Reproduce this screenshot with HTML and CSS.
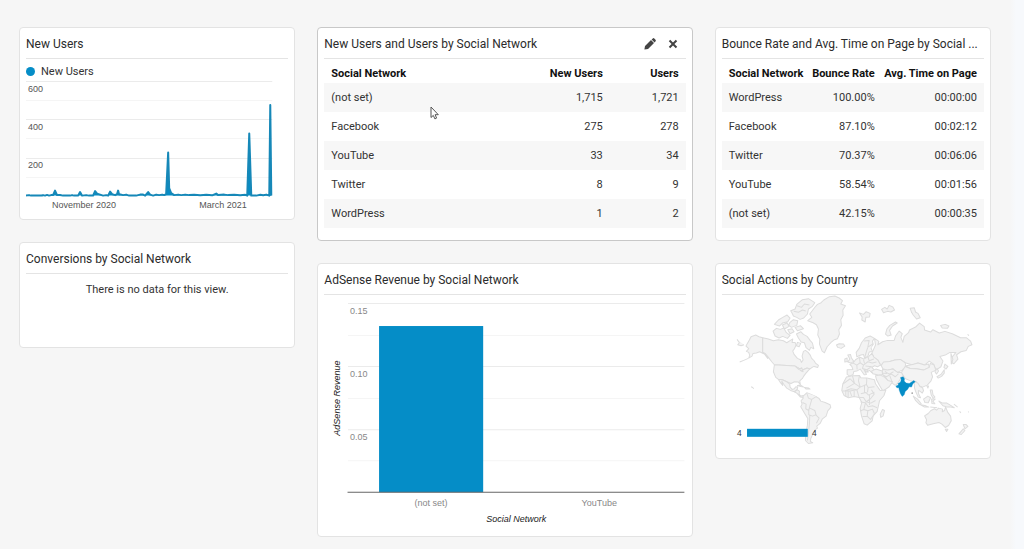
FILE: index.html
```html
<!DOCTYPE html>
<html lang="en">
<head>
<meta charset="utf-8">
<meta name="viewport" content="width=device-width, initial-scale=1">
<title>Social dashboard</title>
<link rel="stylesheet" href="styles.css">
</head>
<body>
<main class="dashboard">
  <div class="column">
    <section class="card">
      <header class="card-header"><h2 class="card-title">New Users</h2></header>
      <div class="legend"><span class="legend-dot"></span>New Users</div>
      <svg class="chart" viewBox="0 0 262 133" role="img" aria-label="New users over time">
        <path class="grid" d="M0 1.5H246M0 39.5H246M0 78.5H246"/>
        <path class="grid-minor" d="M0 20.5H246M0 58.5H246M0 97.5H246"/>
        <path class="series" d="M0 115.500L3 115L5 115.500H16L17 115L19 115.500L21 114.800L23 115.500L25 115L27 115L29 110.500L31 115L34 114.800L37 115.500H44L46 115L48 115.500H52L54 112L56 115.500L60 115L63 115.500H67L69 111L71 113.500L74 114.500L77 115.500L80 115L82 115.500L84 111.500L86 114L89 115L91 114L92 110.500L93 114.500L95 114.500L97 115L100 114.500L103 115.500H110L114 114.500L117 114.500L119 115.500L122 112L124 114.500L127 115.500L130 114.500L133 115L136 114.500L138 115L140 114L142 72.500L143 108L145 113L148 115L152 114.500L155 115L159 114.500L163 115L168 114.700L174 115.200L180 114.700L186 115.200L190 113.500L192 115L198 114.500L202 115L208 114.700L214 115.200L219 114.700L221 115.500L223 53.500L225 115.500H230L234 114.700L237 115.200L240 114.500L243 115.500L244 25L245 115.500"/>
        <g class="axis-text"><text x="2" y="12">600</text><text x="2" y="50">400</text><text x="2" y="88">200</text><text x="26" y="128">November 2020</text><text x="173" y="128">March 2021</text></g>
      </svg>
    </section>
    <section class="card card-empty">
      <header class="card-header"><h2 class="card-title">Conversions by Social Network</h2></header>
      <p class="empty">There is no data for this view.</p>
    </section>
  </div>

  <div class="column">
    <section class="card card-active">
      <header class="card-header">
        <h2 class="card-title">New Users and Users by Social Network</h2>
        <div class="tools">
          <button type="button" class="tool" aria-label="Edit widget"><svg width="12" height="12" viewBox="0 0 12 12"><path d="M.4 11.600L1 8L7 2L10 5L4 11ZM7.600 1.400L8.800 .4Q9.600 -.2 10.300.500L11.500 1.700Q12.200 2.400 11.600 3.200L10.600 4.400Z"/></svg></button>
          <button type="button" class="tool" aria-label="Remove widget"><svg width="10" height="10" viewBox="0 0 10 10"><path d="M.8 2.200L2.200 .8L5 3.600L7.800 .8L9.200 2.200L6.400 5L9.200 7.800L7.800 9.200L5 6.400L2.200 9.200L.8 7.800L3.600 5Z"/></svg></button>
        </div>
      </header>
      <table class="table users">
        <thead><tr><th>Social Network</th><th>New Users</th><th>Users</th></tr></thead>
        <tbody>
          <tr><td>(not set)</td><td>1,715</td><td>1,721</td></tr>
          <tr><td>Facebook</td><td>275</td><td>278</td></tr>
          <tr><td>YouTube</td><td>33</td><td>34</td></tr>
          <tr><td>Twitter</td><td>8</td><td>9</td></tr>
          <tr><td>WordPress</td><td>1</td><td>2</td></tr>
        </tbody>
      </table>
      <svg class="pointer" width="9" height="14" viewBox="0 0 9 14" aria-hidden="true"><path d="M1 1V11.500L3.300 9.400L4.900 12.900L6.600 12.100L5.100 8.700H8.300Z"/></svg>
    </section>
    <section class="card">
      <header class="card-header"><h2 class="card-title">AdSense Revenue by Social Network</h2></header>
      <svg class="chart" viewBox="0 0 361 235" role="img" aria-label="AdSense revenue by social network">
        <path class="grid" d="M24 8.500H360M24 71.500H360M24 134.500H360"/>
        <path class="grid-minor" d="M24 40.500H360M24 103.500H360M24 165.500H360"/>
        <rect class="bar" x="55" y="31" width="104" height="166"/>
        <path class="baseline" d="M23.500 197H360"/>
        <g class="axis-text soft"><text x="26" y="19">0.15</text><text x="26" y="82">0.10</text><text x="26" y="145">0.05</text><text class="middle" x="107" y="211">(not set)</text><text class="middle" x="275" y="211">YouTube</text></g>
        <g class="axis-title"><text class="middle" x="192" y="227">Social Network</text><text class="middle" transform="translate(16 103) rotate(-90)">AdSense Revenue</text></g>
      </svg>
    </section>
  </div>

  <div class="column">
    <section class="card">
      <header class="card-header"><h2 class="card-title">Bounce Rate and Avg. Time on Page by Social ...</h2></header>
      <table class="table bounce">
        <thead><tr><th>Social Network</th><th>Bounce Rate</th><th>Avg. Time on Page</th></tr></thead>
        <tbody>
          <tr><td>WordPress</td><td>100.00%</td><td>00:00:00</td></tr>
          <tr><td>Facebook</td><td>87.10%</td><td>00:02:12</td></tr>
          <tr><td>Twitter</td><td>70.37%</td><td>00:06:06</td></tr>
          <tr><td>YouTube</td><td>58.54%</td><td>00:01:56</td></tr>
          <tr><td>(not set)</td><td>42.15%</td><td>00:00:35</td></tr>
        </tbody>
      </table>
    </section>
    <section class="card">
      <header class="card-header"><h2 class="card-title">Social Actions by Country</h2></header>
      <svg class="chart" viewBox="21 15 786 471" role="img" aria-label="World map of social actions">
        <g class="land">
          <path d="M93 168L97 160L103 150L108 140L122 135L132 140L143 143V186L150 190L160 202L158 205L148 192L134 185L124 189L114 190L111 198L101 204L104 196L101 187L94 184L101 176Z"/>
          <path d="M74 216L86 211L100 205M66 148L73 158L68 164L78 167L87 164"/>
          <path d="M143 143L160 147L175 152L190 149L205 152L215 158L226 151L233 147L231 157L240 157L243 165L238 176L233 183L237 193L247 205L256 209L259 217L264 210L261 198L265 184L271 181L279 187L286 196L289 204L297 212L301 219L310 226L308 232L297 229L291 232L283 238L276 234L266 238L258 243L253 236L240 228L178 224L170 215L160 202L150 190L143 186Z"/>
          <path d="M178 224L240 228L253 236L258 243L266 238L276 234L284 236L280 241L272 250L266 258L262 265L254 272L256 284L250 276L238 275L228 280L215 275L200 268L190 268L182 262L175 245Z"/>
          <path d="M190 268L200 268L215 275L224 282L225 291L231 298L238 296L241 291L248 290L246 299L238 305L226 301L215 294L207 284L200 273L203 286L195 276Z"/>
          <path d="M238 305L246 299L253 303L252 312L257 318L266 316L264 322L256 321L246 310ZM247 286L257 285L266 291L257 289ZM268 292L281 294L285 297L273 297Z"/>
          <path d="M264 318L275 308L288 313L300 318L312 325L317 333L330 337L345 344L347 352L338 362L333 378L322 386L315 400L305 408L307 414L299 420L293 432L287 445L286 454L293 458L280 460L271 451L272 430L277 405L278 385L267 367L257 350L261 342L258 332L264 325Z"/>
          <path d="M275 309L280 324L290 328L304 319M262 337L273 342L272 356L281 361L284 349L290 328M281 361L281 374L292 378L303 374L299 361L284 354M284 376L283 400L280 429L277 451M303 375L312 384L304 399"/>
          <path d="M278 92L290 82L284 72L300 51L307 43L318 38L326 30L343 20L359 18L372 24L382 32L377 42L391 47L383 60L384 76L377 89L379 106L371 119L373 132L367 146L358 149L347 158L336 170L328 188L321 183L313 162L314 148L308 135L310 117L304 104L294 98Z"/>
          <path d="M232 71L227 62L240 57L245 43L262 29L280 26L299 38L292 49L280 57L277 72L266 84L255 88L245 82L235 78Z"/>
          <path d="M236 64L250 67L262 60L272 63M246 47L259 52L268 42L283 45"/>
          <path d="M178 103L190 90L203 82L216 75L225 84L218 95L202 99L193 108ZM224 98L235 89L248 92L245 106L229 112L221 105ZM240 112L256 107L265 116L247 122ZM202 105L216 99L222 109L208 117ZM174 123L184 115L196 118L206 114L214 128L225 136L217 145L203 139L192 144L180 138ZM218 119L231 116L237 125L225 131ZM244 132L257 125L265 133L276 139L285 151L292 159L296 176L287 172L283 181L273 173L268 158L258 156L250 144ZM247 157L257 160L252 170L244 167Z"/>
          <path d="M364 165L372 161L385 162L389 168L378 175L368 172ZM108 290L113 292L116 296"/>
          <path d="M241 229L251 238L260 233L264 245L254 239"/>
        </g>
        <g class="land" transform="translate(390 0)">
          <path d="M43 69L55 73L63 65L75 70L73 81L62 82L60 96L50 90L51 81ZM109 58L119 52L126 57L132 46L143 51L148 60L137 66L127 64L115 68ZM195 55L207 53L211 66L219 71L225 83L214 87L204 75L199 67ZM286 106L300 103L311 108L307 115L291 114Z"/>
          <path d="M121 132L125 117L134 106L151 96L156 99L142 108L133 121L138 135L128 138Z"/>
          <path d="M35 200L33 187L42 175L49 158L60 144L75 138L88 145L82 153L84 163L77 173L82 184L72 186L68 199L58 204L55 193L47 195Z"/>
          <path d="M88 145L101 154L98 164L112 155L127 151L147 151L151 138L162 123L171 131L167 142L173 157L177 139L190 128L193 120L211 111L223 99L237 110L238 120L256 126L263 119L282 129L299 124L321 131L346 143L363 143L376 153L380 164L369 169L363 181L347 185L334 194L338 207L326 221L320 218L319 203L332 187L314 187L300 195L284 199L293 213L287 230L272 240L265 222L252 213L238 225L218 219L202 225L180 218L165 208L149 210L134 214L132 224L119 231L106 225L98 210L86 201L80 190L86 176L91 165Z"/>
          <path d="M108 226L115 216L134 214L149 210L165 208L180 218L182 230L171 240L156 247L143 236L127 241L113 236Z"/>
          <path d="M180 228L202 223L218 219L238 225L250 222L252 232L235 240L213 236L195 235Z"/>
          <path d="M168 248L180 229L195 235L213 236L235 240L252 232L255 220L266 224L272 240L258 247L262 260L257 273L246 285L232 291L221 287L213 274L198 273L181 266Z"/>
          <path d="M112 238L128 240L143 237L157 247L169 247L175 260L166 266L157 280L150 286L141 279L130 276L120 260L110 252Z"/>
          <path d="M8 195L16 193L19 204L26 214L17 219L8 216L14 207ZM-1 207L6 204L6 214L-1 216Z"/>
          <path d="M6 239L23 238L20 229L14 223L24 219L31 209L43 201L56 207L71 199L80 190L86 201L98 210L106 225L97 230L88 227L80 232L88 240L80 248L73 241L64 246L56 237L64 253L57 254L45 237L35 243L26 244L24 253L14 258L6 253Z"/>
          <path d="M79 243L92 237L111 243L112 253L99 255L83 251ZM91 257L106 255L119 262L128 271L142 275L132 290L113 303L103 286L94 269ZM111 249L126 250"/>
          <path d="M-7 282L4 261L22 257L43 256L47 263L65 264L88 269L91 281L105 301L122 300L116 317L103 332L99 350L96 364L84 377L81 392L66 405L57 401L49 377L45 355L50 337L42 322L27 319L10 323L-3 316L-10 301Z"/>
          <path d="M112 358L118 361L114 377L107 382L105 372Z"/>
          <path d="M-7 282L15 266M4 294L28 280L45 291M22 257L28 280L15 266M43 256L40 272L45 291L35 299L18 296L0 302M65 264L64 283L69 292L88 290M45 291L64 283M47 311L62 307L70 315L88 306M35 299L42 322L55 322L63 335L76 326L87 312L79 299M-9 303L14 303L20 319M14 303L35 299M58 286L58 307M69 292L67 307M46 336L61 338L69 350L82 347L96 353M61 338L56 358L47 362M56 358L68 362L66 378L52 379M68 362L82 357L88 371M63 335L77 339L91 331M66 378L76 388L88 371M2 303V319M9 303V322M27 300V319M73 315V345"/>
          <path d="M24 219L35 225L45 218L55 225L68 215L81 219L94 216M35 225L36 238M45 218L43 203M55 225L52 235L65 239L76 232M68 199L72 212L86 207M55 209L58 220M61 228L80 230M65 239L69 248M111 253L123 260L139 252L150 260L160 251M119 244L132 252L145 245M132 252L141 276M84 161L68 171L63 187L58 204M68 171L72 151L57 153"/>
          <path d="M207 275L218 279L224 289L232 293L235 302L231 309L225 304L220 301L220 311L226 323L219 321L212 306L208 294ZM245 288L250 288L248 294ZM255 300L261 300L263 313L269 321L264 325L258 315Z"/>
          <path d="M204 318L217 327L228 341L223 343L211 331ZM235 327L248 318L256 323L249 338L239 337ZM226 344L239 346L251 351L238 351ZM259 327L270 327L263 333L269 341L260 340ZM281 333L292 339L305 339L315 345L327 353L316 351L306 351L293 347ZM255 351L276 353M326 342L337 351"/>
          <path d="M275 235L280 243L274 252L269 245ZM299 222L308 229L302 237L296 232ZM297 239L297 249L289 259L279 264L275 260L287 253ZM317 190L323 208L318 222Z"/>
          <path d="M238 377L249 370L257 361L268 356L274 360L280 354L292 357L291 365L298 361L301 350L307 366L316 378L318 392L310 406L300 412L290 402L281 397L264 401L247 405L242 398L244 389ZM300 417L308 417L304 424ZM354 403L362 403L368 409L359 416ZM354 416L359 421L348 433L341 431Z"/>
          <path class="bar" d="M166 262L174 260L178 266L177 273L183 279L192 280L199 276L206 271L210 275L203 281L199 291L192 290L187 298L180 304L177 314L171 319L166 311L162 300L161 293L155 293L152 288L160 285L158 281L166 276L168 269Z"/>
          <path class="speck" d="M199 307L203 307L202 312L199 311Z"/>
          <path d="M368 366L371 365M343 364L347 368M367 133L371 137"/>
        </g>
        <rect class="bar" x="96" y="416" width="182" height="24"/>
        <g class="map-text"><text x="66" y="437">4</text><text x="291" y="437">4</text></g>
      </svg>
    </section>
  </div>
</main>
</body>
</html>
```

FILE: styles.css
```css
* { box-sizing: border-box; }

body {
  margin: 0;
  min-height: 100vh;
  background: linear-gradient(to left, #f7f9fc 8px, #f6f6f6 14px);
  color: #333;
  font: 11px/16px Roboto, "Liberation Sans", sans-serif;
}

.dashboard {
  display: grid;
  grid-template-columns: 276fr 375fr 276fr;
  gap: 22px;
  padding: 27px 33px 11px 19px;
}

.column {
  display: flex;
  flex-direction: column;
  gap: 22px;
  min-width: 0;
}

.card {
  position: relative;
  padding: 0 6px 6px;
  border: 1px solid #e3e3e3;
  border-radius: 4px;
  background: #fff;
}

.card-active { border-color: #c8c8c8; }
.card-active, .card:has(.bounce) { padding-bottom: 12px; }

.card-header {
  display: flex;
  align-items: center;
  height: 31px;
  padding-top: 2px;
  border-bottom: 1px solid #e4e4e4;
}

.card-title {
  flex: 1;
  min-width: 0;
  margin: 0;
  overflow: hidden;
  color: #2b2b2b;
  font-size: 12px;
  font-weight: 400;
  text-overflow: ellipsis;
  white-space: nowrap;
}

.tools { display: flex; gap: 8px; padding-right: 5px; }

.tool {
  display: grid;
  place-items: center;
  width: 15px;
  height: 16px;
  padding: 0;
  border: 0;
  background: none;
  fill: #444;
}

.legend {
  display: flex;
  align-items: center;
  gap: 6px;
  height: 21px;
  padding-top: 4px;
}

.legend-dot {
  width: 9px;
  height: 9px;
  border-radius: 50%;
  background: #058dc7;
}

.card-empty { min-height: 106px; }
.empty { margin: 8px 0; text-align: center; }

.chart { display: block; width: 100%; height: auto; }
.grid, .grid-minor { fill: none; stroke: #ebebeb; }
.grid-minor { stroke: #f5f5f5; }
.series { fill: #058dc7; stroke: #1688b8; stroke-width: 2; stroke-linejoin: round; }
.bar { fill: #058dc7; }
.baseline { stroke: #666; }
.axis-text, .axis-title { fill: #555; font: 9px "Liberation Sans", sans-serif; }
.soft { fill: #888; }
.axis-title { fill: #222; font-style: italic; }
.middle { text-anchor: middle; }

.table { width: 100%; border-collapse: collapse; table-layout: fixed; }
.table th, .table td { height: 29px; padding: 1px 7px 0 0; text-align: right; white-space: nowrap; }
.table th { height: 24px; padding-top: 6px; color: #111; font-weight: 700; }
.table th:first-child, .table td:first-child { padding: 1px 0 0 7px; text-align: left; }
.table th:first-child { padding-top: 6px; }
.table tbody tr:nth-child(odd) { background: #f7f7f7; }
.users th:nth-child(2) { width: 28%; }
.users th:nth-child(3) { width: 21%; }
.bounce th:nth-child(2) { width: 28%; }
.bounce th:nth-child(3) { width: 39%; }

.pointer { position: absolute; top: 78px; left: 112px; }
.pointer path { fill: #fff; stroke: #555; }

.land { fill: #f3f3f3; stroke: #dcdcdc; stroke-width: 3; stroke-linejoin: round; }
.land .bar { fill: #058dc7; stroke: #058dc7; stroke-width: 1; }
.land .speck { fill: #777; stroke: none; }
.map-text { fill: #333; font: 25px "Liberation Sans", sans-serif; }
```
